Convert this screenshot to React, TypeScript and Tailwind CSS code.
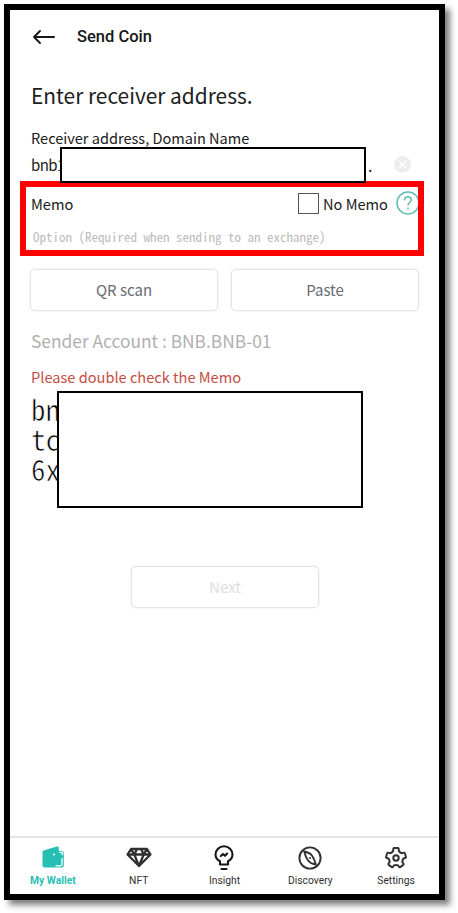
import type { ReactNode } from "react";

const sans = "font-['Noto_Sans_CJK_KR',sans-serif]";
const mono = "font-['Noto_Sans_Mono_CJK_KR','DejaVu_Sans_Mono',monospace]";

function BackArrow() {
  return (
    <svg width="24" height="16" viewBox="0 0 24 16" fill="none" stroke="#171717" strokeWidth="1.9" strokeLinecap="round" strokeLinejoin="round">
      <path d="M22 8H2M8 2L2 8l6 6" />
    </svg>
  );
}

function WalletIcon() {
  return (
    <svg width="24" height="24" viewBox="0 0 24 24">
      <path d="M2.400 4.400L15.800.6q2-.5 2 1.400v3H21q1.800 0 1.800 1.800V19q0 2.500-2.500 2.500H4Q1.500 21.500 1.500 19V5.700q0-1 .9-1.300z" fill="#27bfb3" />
      <path d="M18.300 6.300h2.200q.8 0 .8.800v2.200M21 12v6q0 1.800-1.800 1.800h-4.700" fill="none" stroke="#fff" strokeWidth="1.300" />
      <circle cx="13" cy="8.600" r="1" fill="#fff" />
    </svg>
  );
}

function DiamondIcon() {
  return (
    <svg width="26" height="24" viewBox="0 0 26 24" fill="none" stroke="#303030" strokeWidth="2.300" strokeLinejoin="round">
      <path d="M5 3h16l3.500 5.500L13 20 1.500 8.500zM1.500 8.500h23M8.300 8.500L13 20l4.700-11.500M5 3l3.300 5.500L11 3M15 3l2.700 5.500L21 3" />
    </svg>
  );
}

function BulbIcon() {
  return (
    <svg width="24" height="28" viewBox="0 0 24 28" fill="none" stroke="#171717" strokeWidth="2.100" strokeLinecap="round" strokeLinejoin="round">
      <path d="M8 20.500v-3.300C5.300 15.800 3.500 13.500 3.500 10.500a8.500 8.300 0 0 1 17 0c0 3-1.800 5.300-4.500 6.700v3.300zM9.500 25h5M8.800 12L11 10l2 1.800 2.200-2.200" />
    </svg>
  );
}

function CompassIcon() {
  return (
    <svg width="24" height="24" viewBox="0 0 24 24" fill="none" stroke="#303030" strokeWidth="1.900" strokeLinejoin="round">
      <circle cx="12" cy="12" r="10.600" />
      <path d="M6.200 5.500c3.500.7 6.300 2 7.900 4.300 1.700 2.300 2.800 5.200 3.700 8.700-3.500-.7-6.300-2-7.900-4.300-1.700-2.300-2.800-5.200-3.700-8.700z" />
      <circle cx="12" cy="12" r="1" fill="#303030" stroke="none" />
    </svg>
  );
}

function polar(radius: number, degrees: number) {
  const angle = (degrees * Math.PI) / 180;
  return `${(12 + radius * Math.cos(angle)).toFixed(2)} ${(12 + radius * Math.sin(angle)).toFixed(2)}`;
}

// Five rounded teeth, one pointing straight up.
const gearPath = [0, 1, 2, 3, 4]
  .map((tooth) => {
    const middle = -90 + tooth * 72;
    return `${tooth === 0 ? "M" : "L"}${polar(7.6, middle - 21)} Q${polar(10.6, middle - 17)} ${polar(10, middle - 9)} L${polar(10, middle + 9)} Q${polar(10.6, middle + 17)} ${polar(7.6, middle + 21)} Q${polar(6.6, middle + 36)} ${polar(7.6, middle + 51)}`;
  })
  .join(" ");

function GearIcon() {
  return (
    <svg width="24" height="24" viewBox="0 0 24 24" fill="none" stroke="#303030" strokeWidth="2" strokeLinejoin="round">
      <path d={`${gearPath} Z`} />
      <circle cx="12" cy="12" r="2.700" />
    </svg>
  );
}

function Tab({ icon, label, active = false }: { icon: ReactNode; label: string; active?: boolean }) {
  return (
    <button className={`flex flex-1 flex-col items-center font-['Roboto',sans-serif] text-[10.300px] leading-[16px] ${active ? "font-bold text-[#27bfb3]" : "text-[#303030]"}`}>
      <span className="flex h-[30px] items-center">{icon}</span>
      <span>{label}</span>
    </button>
  );
}

const button = "h-[42px] w-[188px] rounded-[5px] border border-[#e4e4e4] pt-px text-[15px] shadow-[0_0_2px_rgba(0,0,0,0.12)]";

export default function App() {
  return (
    <div className="h-[913px] w-[458px] overflow-hidden bg-white pt-1 pl-1">
      <div className={`flex h-[896px] w-[441px] flex-col border-[6px] border-black bg-white text-[#202020] shadow-[5px_5px_6px_rgba(0,0,0,0.5)] ${sans}`}>
        <header className="flex h-[53px] items-center gap-[21px] pl-[22px]">
          <BackArrow />
          <h1 className="pt-px font-['Roboto',sans-serif] text-[16.500px] font-medium text-[#171717]">Send Coin</h1>
        </header>
        <main className="h-[773px] shrink-0 whitespace-nowrap pl-[21px]">
          <h2 className="pt-[16px] text-[20.900px] leading-8">Enter receiver address.</h2>
          <p className="mt-[15px] text-[14.550px] leading-6">Receiver address, Domain Name</p>
          <div className="mt-[-3px] flex h-[35px] items-center">
            <span className="w-[29px] text-[15px] leading-6 tracking-[-0.600px]">bnb1</span>
            <span className="relative z-10 h-9 w-[306px] shrink-0 border-2 border-black bg-white" />
            <span className="ml-[2px] w-[26px] text-[16px]">.</span>
            <svg width="17" height="17" viewBox="0 0 17 17">
              <circle cx="8.500" cy="8.500" r="8.300" fill="#ececec" />
              <path d="M4.500 4.500l8 8M12.500 4.500l-8 8" stroke="white" strokeWidth="1.300" />
            </svg>
          </div>
          <section className="-ml-[11px] mt-[-1px] h-[75px] w-[404px] overflow-hidden border-[6px] border-[#ff0000] pl-[5px]">
            <div className="flex h-[33px] items-center">
              <span className="w-[267px] shrink-0 pt-px text-[14.600px]">Memo</span>
              <span className="h-[21px] w-[21px] shrink-0 border border-[#555]" />
              <span className="ml-1 w-[73px] shrink-0 pt-px text-[14.600px]">No Memo</span>
              <svg className="mb-[2px] shrink-0" width="24" height="24" viewBox="0 0 24 24" fill="none" stroke="#60bdb5" strokeWidth="1.500">
                <circle cx="12" cy="12" r="11" />
                <path d="M8.600 9.300q0-3.600 3.300-3.600 3.300 0 3.300 3 0 1.700-1.800 3Q12 12.800 12 14.500M12 16.500v2" />
              </svg>
            </div>
            <p className={`pl-[2px] text-[13px] leading-[34px] text-[#bcbcbc] ${mono}`}>Option (Required when sending to an exchange)</p>
          </section>
          <div className="-ml-px mt-[13px] flex gap-[13px] text-[#686b72]">
            <button className={button}>QR scan</button>
            <button className={button}>Paste</button>
          </div>
          <p className="mt-[15px] text-[17.350px] leading-[30px] text-[#afafaf]">Sender Account : BNB.BNB-01</p>
          <p className="mt-[9px] text-[14.600px] leading-6 text-[#c34e47]">Please double check the Memo</p>
          <div className="mt-[2px] flex h-[117px]">
            <div className={`w-[26px] pt-[2px] text-[29px] leading-[30px] text-black [-webkit-text-stroke:0.7px_white] ${mono}`}>
              <div>bn</div>
              <div>tc</div>
              <div>6x</div>
            </div>
            <div className="relative z-10 h-[117px] w-[306px] border-2 border-black bg-white" />
          </div>
          <button className={`ml-[100px] mt-[58px] text-[#dedede] ${button}`}>Next</button>
        </main>
        <nav className="flex h-[58px] shrink-0 border-t-2 border-[#e4e4e4] pt-[5px]">
          <Tab active icon={<WalletIcon />} label="My Wallet" />
          <Tab icon={<DiamondIcon />} label="NFT" />
          <Tab icon={<BulbIcon />} label="Insight" />
          <Tab icon={<CompassIcon />} label="Discovery" />
          <Tab icon={<GearIcon />} label="Settings" />
        </nav>
      </div>
    </div>
  );
}
